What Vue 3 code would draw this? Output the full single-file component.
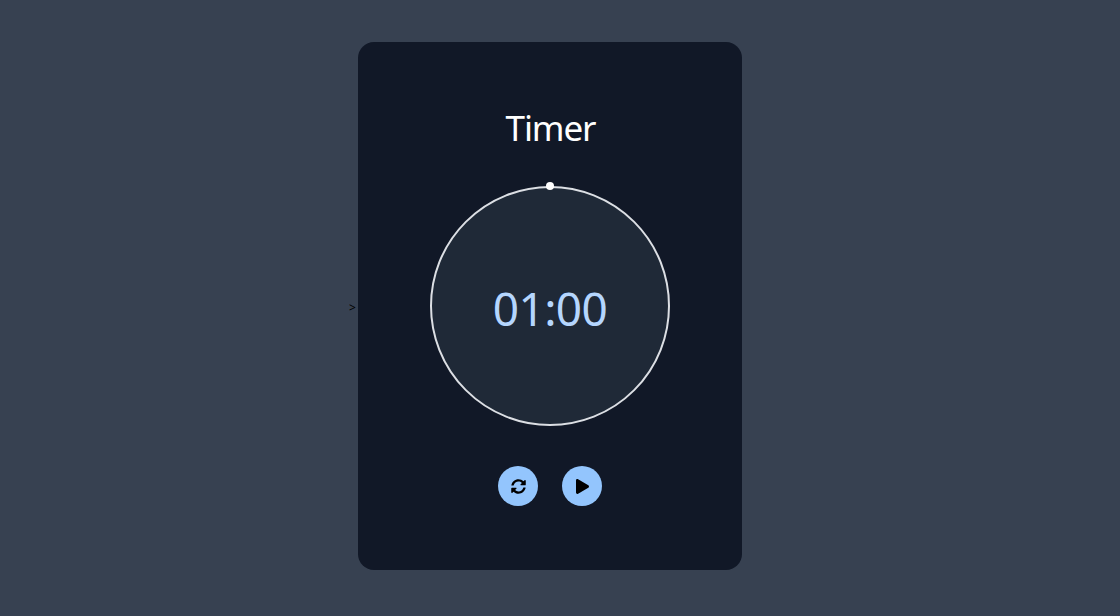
<script setup>
const title = 'Timer'
const time = '01:00'
</script>

<template>
  <div class="page">
    <span class="stray">&gt;</span>
    <main class="card">
      <h1 class="title">{{ title }}</h1>
      <div class="dial">
        <span class="dot"></span>
        <span class="time">{{ time }}</span>
      </div>
      <div class="controls">
        <button class="btn" type="button" aria-label="Reset">
          <svg class="icon-sync" viewBox="0 0 512 512"><path fill="currentColor" d="M370.72 133.28C339.458 104.008 298.888 87.962 255.848 88c-77.458.068-144.328 53.178-162.791 126.85-1.344 5.363-6.122 9.15-11.651 9.15H24.103c-7.498 0-13.194-6.807-11.807-14.176C33.933 94.924 134.813 8 256 8c66.448 0 126.791 26.136 171.315 68.685L463.03 40.97C478.149 25.851 504 36.559 504 57.941V192c0 13.255-10.745 24-24 24H345.941c-21.382 0-32.09-25.851-16.971-40.971l41.75-41.749zM32 296h134.059c21.382 0 32.09 25.851 16.971 40.971l-41.75 41.75c31.262 29.273 71.835 45.319 114.876 45.28 77.418-.07 144.315-53.144 162.787-126.849 1.344-5.363 6.122-9.15 11.651-9.15h57.304c7.498 0 13.194 6.807 11.807 14.176C478.067 417.076 377.187 504 256 504c-66.448 0-126.791-26.136-171.315-68.685L48.97 471.03C33.851 486.149 8 475.441 8 454.059V320c0-13.255 10.745-24 24-24z"/></svg>
        </button>
        <button class="btn" type="button" aria-label="Play">
          <svg class="icon-play" viewBox="0 0 448 512"><path fill="currentColor" d="M424.4 214.7L72.4 6.6C43.8-10.3 0 6.1 0 47.9V464c0 37.5 40.7 60.1 72.4 41.3l352-208c31.4-18.5 31.5-64.1 0-82.6z"/></svg>
        </button>
      </div>
    </main>
  </div>
</template>

<style>
html, body { margin: 0; background: #374151; }
</style>

<style scoped>
.page {
  box-sizing: border-box;
  height: 616px;
  padding: 42px 30px 46px 0;
  display: flex;
  justify-content: center;
  align-items: center;
  background: #374151;
  font-family: "Noto Sans", "Open Sans", sans-serif;
}
.stray {
  box-sizing: border-box;
  width: 10px;
  padding-left: 1px;
  margin-top: 4px;
  font-size: 12px;
  line-height: 16px;
  color: #000;
}
.card {
  box-sizing: border-box;
  width: 384px;
  height: 528px;
  padding: 64px 0;
  border-radius: 16px;
  background: #111827;
  display: flex;
  flex-direction: column;
  align-items: center;
}
.title {
  margin: 0 0 40px;
  padding-left: 1px;
  font-size: 35px;
  line-height: 44px;
  height: 40px;
  letter-spacing: -1.1px;
  font-weight: 400;
  color: #fff;
}
.dial {
  position: relative;
  box-sizing: border-box;
  width: 240px;
  height: 240px;
  border: 2px solid #dcdfe4;
  border-radius: 50%;
  background: #1f2937;
  display: flex;
  align-items: center;
  justify-content: center;
}
.dot {
  position: absolute;
  top: -6px;
  left: 50%;
  width: 8px;
  height: 8px;
  margin-left: -4px;
  border-radius: 50%;
  background: #fff;
}
.time {
  margin-top: 4px;
  font-size: 46px;
  line-height: 48px;
  letter-spacing: -0.6px;
  font-weight: 400;
  color: #b5d6fe;
}
.controls {
  margin-top: 40px;
  display: flex;
  gap: 24px;
}
.btn {
  width: 40px;
  height: 40px;
  padding: 0;
  border: 0;
  border-radius: 50%;
  background: #93c5fd;
  color: #000;
  display: flex;
  align-items: center;
  justify-content: center;
}
.icon-sync { width: 15px; height: 15px; margin-left: 1px; }
.icon-play { width: 13px; height: 15px; margin-left: 1px; }
</style>
